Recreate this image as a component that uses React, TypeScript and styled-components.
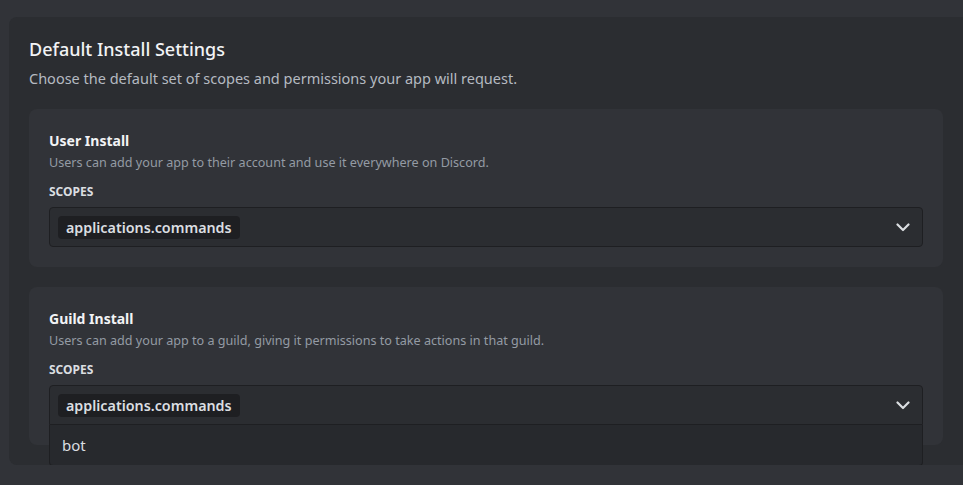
import React, {FC} from 'react';
import styled, {createGlobalStyle} from "styled-components";

const GlobalStyle = createGlobalStyle`
  html, body {
    margin: 0;
    padding: 0;
    background: #313338;
    overflow: hidden;
  }
  body {
    font-family: "Noto Sans", "Open Sans", sans-serif;
    color: #dbdee1;
  }
`

type ScopeCardType = {
    title: string
    description: string
    open?: boolean
    options?: string[]
}

const Chevron = () => (
    <svg width="14" height="9" viewBox="0 0 14 9" fill="none">
        <path d="M1.5 1.5L7 7l5.5-5.5" stroke="#dbdee1" strokeWidth="2.2" strokeLinecap="round" strokeLinejoin="round"/>
    </svg>
)

const ScopeCard: FC<ScopeCardType> = (props) => {
    const {title, description, open, options} = props
    return (
        <StCard>
            <h3>{title}</h3>
            <p>{description}</p>
            <StLabel>Scopes</StLabel>
            <StSelectWrap>
                <StSelect $open={open}>
                    <StTag>applications.commands</StTag>
                    <Chevron/>
                </StSelect>
                {open && options && (
                    <StMenu>
                        {options.map(el => <div key={el} className={'option'}>{el}</div>)}
                    </StMenu>
                )}
            </StSelectWrap>
        </StCard>
    )
}

export default function App() {
    return (
        <>
            <GlobalStyle/>
            <StPanel>
                <StHeader>
                    <h2>Default Install Settings</h2>
                    <p>Choose the default set of scopes and permissions your app will request.</p>
                </StHeader>
                <ScopeCard
                    title={'User Install'}
                    description={'Users can add your app to their account and use it everywhere on Discord.'}
                />
                <ScopeCard
                    title={'Guild Install'}
                    description={'Users can add your app to a guild, giving it permissions to take actions in that guild.'}
                    open
                    options={['bot']}
                />
            </StPanel>
        </>
    )
}

const StPanel = styled.div`
  display: flex;
  flex-direction: column;
  gap: 20px;
  margin: 17px -10px 0 9px;
  padding: 20px 30px 20px 20px;
  background: #2b2d31;
  border-radius: 8px;
`

const StHeader = styled.div`
  display: flex;
  flex-direction: column;
  gap: 8px;
  padding-top: 1px;
  margin-bottom: 1px;
  & h2 {
    margin: 0;
    font-size: 18px;
    line-height: 22px;
    font-weight: 500;
    color: #f2f3f5;
  }
  & p {
    margin: 0;
    font-size: 14.5px;
    line-height: 20px;
    color: #b5bac1;
  }
`

const StCard = styled.div`
  display: flex;
  flex-direction: column;
  padding: 21px 20px 20px;
  background: #313338;
  border-radius: 8px;
  & h3 {
    margin: 0;
    font-size: 14px;
    line-height: 22px;
    font-weight: 700;
    color: #f2f3f5;
  }
  & p {
    margin: 1px 0 0;
    font-size: 12.6px;
    line-height: 20px;
    color: #949ba4;
  }
`

const StLabel = styled.div`
  margin: 11px 0 7px;
  font-size: 12px;
  line-height: 16px;
  font-weight: 700;
  text-transform: uppercase;
  color: #dbdee1;
`

const StSelectWrap = styled.div`
  position: relative;
`

const StSelect = styled.div<{ $open?: boolean }>`
  display: flex;
  align-items: center;
  justify-content: space-between;
  box-sizing: border-box;
  height: 40px;
  padding: 0 12px 0 8px;
  background: #2b2d31;
  border: 1px solid #1e1f22;
  border-radius: ${p => p.$open ? '4px 4px 0 0' : '4px'};
`

const StTag = styled.span`
  display: flex;
  align-items: center;
  height: 23px;
  padding: 0 8px;
  background: #1e1f22;
  border-radius: 4px;
  font-size: 14.3px;
  font-weight: 600;
  color: #dbdee1;
`

const StMenu = styled.div`
  position: absolute;
  top: 100%;
  left: 0;
  right: 0;
  box-sizing: border-box;
  background: #27292d;
  border: 1px solid #1e1f22;
  border-top: none;
  border-radius: 0 0 4px 4px;
  z-index: 2;
  .option {
    display: flex;
    align-items: center;
    height: 40px;
    padding: 0 12px;
    font-size: 15px;
    color: #dbdee1;
  }
`
